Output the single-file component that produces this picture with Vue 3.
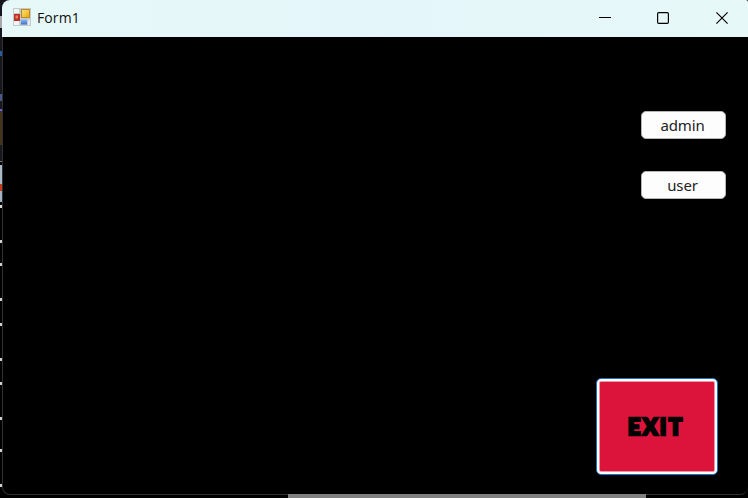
<script setup>
const marks = [
  { y: 0, h: 16, c: '#17151d' },
  { y: 16, h: 12, c: '#aaa6ad' },
  { y: 28, h: 23, c: '#17151d' },
  { y: 51, h: 5, c: '#285d9e' },
  { y: 56, h: 38, c: '#17171b' },
  { y: 94, h: 7, c: '#4c5688' },
  { y: 101, h: 8, c: '#18181c' },
  { y: 109, h: 2, c: '#6860dc' },
  { y: 111, h: 34, c: '#43351c' },
  { y: 145, h: 16, c: '#17181b' },
  { y: 161, h: 1, c: '#777' },
  { y: 165, h: 19, c: '#aab9c8' },
  { y: 184, h: 7, c: '#c23c22' },
  { y: 191, h: 11, c: '#a5b4c4' },
  { y: 205, h: 3, c: '#d8d8d8' },
  ...[240, 263, 298, 323, 358, 382, 417, 449, 484].map((y) => ({ y, h: 3, c: '#d0d0d0' })),
]
</script>

<template>
  <div class="desktop">
    <svg class="edge" width="2" height="498" shape-rendering="crispEdges">
      <rect v-for="m in marks" :key="m.y" x="0" :y="m.y" width="2" :height="m.h" :fill="m.c" />
    </svg>
    <div class="main">
      <div class="window">
        <header class="titlebar">
          <svg class="app-icon" width="18" height="18" viewBox="0 0 18 18">
            <defs>
              <linearGradient id="gold" x1="0" y1="0" x2="1" y2="1">
                <stop offset="0" stop-color="#ffe47a" /><stop offset="1" stop-color="#eba60c" />
              </linearGradient>
              <linearGradient id="blue" x1="0" y1="0" x2="0" y2="1">
                <stop offset="0" stop-color="#8bb9f7" /><stop offset="1" stop-color="#3c6fd0" />
              </linearGradient>
            </defs>
            <rect width="18" height="18" fill="#c5cbcd" />
            <rect x="1" y="1" width="5" height="4" fill="#eef7f7" />
            <rect x="1" y="13" width="5" height="4" fill="#eef7f7" />
            <rect x="15" y="12" width="2" height="5" fill="#e4eded" />
            <rect x="1" y="6" width="6" height="7" fill="#b93228" />
            <rect x="2.5" y="7.5" width="2.5" height="3" fill="#ee7c60" />
            <rect x="8.5" y="1.5" width="8" height="8" fill="url(#gold)" stroke="#bd8a20" />
            <rect x="8" y="11.5" width="6" height="5" fill="url(#blue)" />
          </svg>
          <span class="title">Form1</span>
          <div class="controls">
            <svg width="12" height="12"><path d="M0 5.5H12" stroke="#000" /></svg>
            <svg width="12" height="12"><rect x=".6" y=".6" width="10.8" height="10.8" rx="1.2" fill="none" stroke="#000" stroke-width="1.2" /></svg>
            <svg class="close" width="12" height="12"><path d="M.4 .4L11.6 11.6M11.6 .4L.4 11.6" stroke="#000" stroke-width="1.15" /></svg>
          </div>
        </header>
        <main class="form">
          <button class="btn">admin</button>
          <button class="btn user">user</button>
          <button class="exit"><span>EXIT</span></button>
        </main>
      </div>
      <div class="scroll"></div>
    </div>
  </div>
</template>

<style>
body { margin: 0; background: #000; overflow: hidden; }
</style>
<style scoped>
.desktop { display: flex; width: 748px; height: 498px; background: #000; overflow: hidden; }
.edge { display: block; flex: none; }
.main { width: 746px; display: flex; flex-direction: column; background: linear-gradient(#17151d 0 20px, #000 20px); }
.window { box-sizing: border-box; height: 495px; border: 1px solid #303030; border-top: 0; border-right: 0; border-radius: 8px 2px 8px 8px; background: #000; }
.titlebar { height: 37px; margin-left: -1px; display: flex; align-items: center; background: linear-gradient(90deg, #e6f8f7, #e5f6fb 50%, #e6f8f7); border-radius: 8px 2px 0 0; box-sizing: border-box; padding: 0 20px 1px 11px; }
.app-icon { flex: none; margin-top: -2px; }
.title { margin: -2px 0 0 6px; font: 14px "Open Sans", sans-serif; letter-spacing: 0.1px; color: #111; }
.controls { margin-left: auto; display: flex; gap: 46px; }
.controls svg { display: block; }
.controls .close { margin-left: 1px; }
.form { height: 457px; box-sizing: border-box; padding: 74px 22px 0 0; display: flex; flex-direction: column; align-items: flex-end; }
.btn { box-sizing: border-box; flex: none; width: 85px; height: 28px; padding: 0 2px 0 0; border: 1px solid #b4b4b4; border-radius: 5px; background: #fdfdfd; color: #222; font: 15px "Noto Sans", sans-serif; letter-spacing: -0.15px; }
.user { margin-top: 32px; }
.exit { box-sizing: border-box; flex: none; margin: 179px 8px 0 0; width: 122px; height: 97px; padding: 0; border: 1px solid #0878d0; border-radius: 5px; background: #dc143c; box-shadow: inset 0 0 0 2px #fff, inset 0 0 0 3px #f194a7; color: #000; }
.exit span { display: block; margin-left: -2px; font: 900 22px "Lato", sans-serif; -webkit-text-stroke: 2.4px #000; letter-spacing: 2.2px; }
.scroll { width: 358px; height: 4px; margin: -1px 0 0 286px; background: #808080; }
</style>
